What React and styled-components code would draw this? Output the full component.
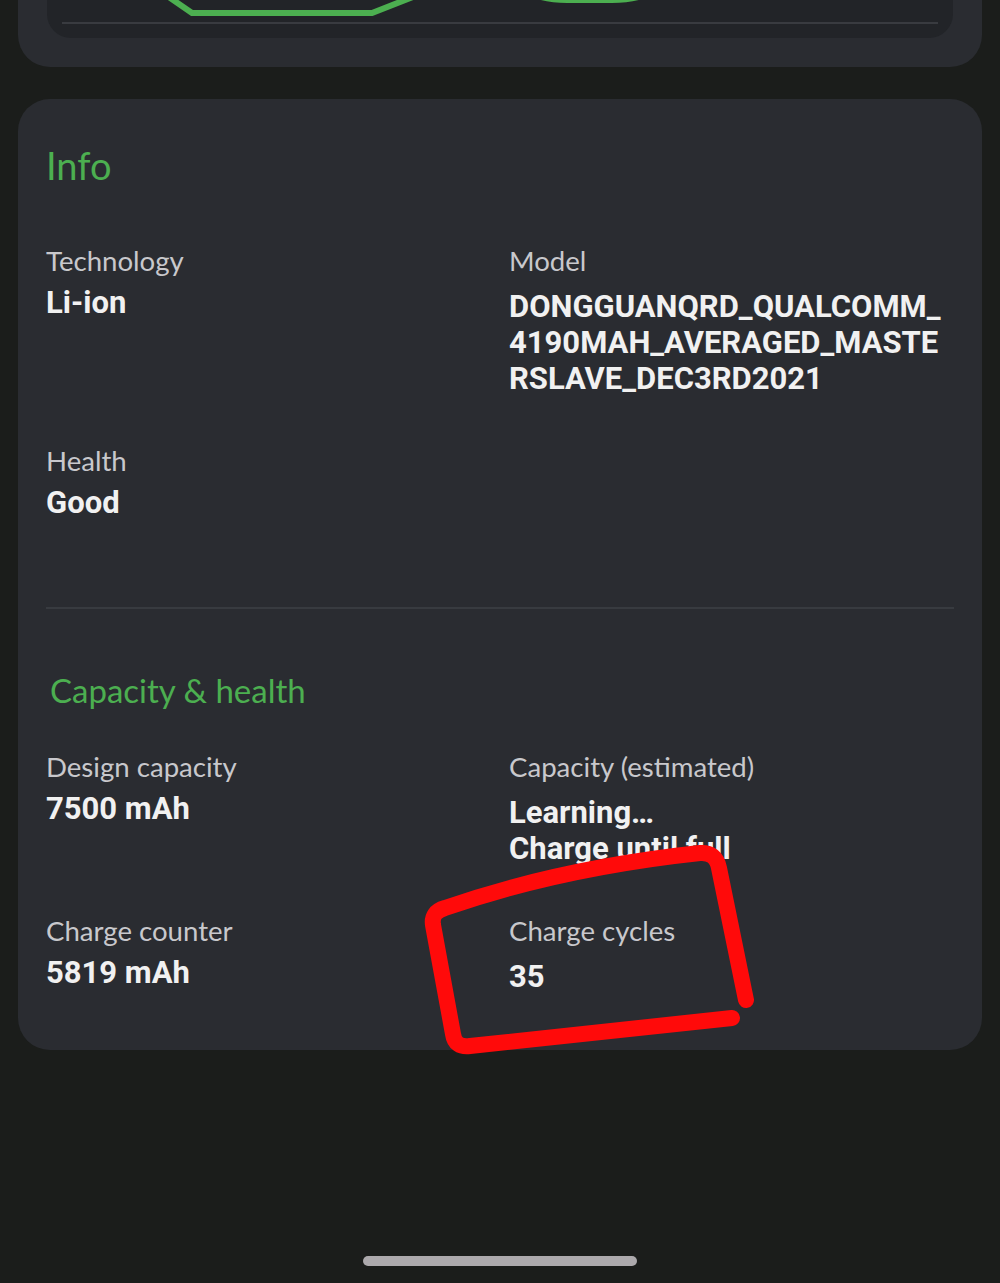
import styled, { createGlobalStyle } from "styled-components";

const infoItems = [
  { id: "technology", label: "Technology", lines: ["Li-ion"] },
  {
    id: "model",
    label: "Model",
    lines: [
      "DONGGUANQRD_QUALCOMM_",
      "4190MAH_AVERAGED_MASTE",
      "RSLAVE_DEC3RD2021",
    ],
  },
  { id: "health", label: "Health", lines: ["Good"] },
];

const capacityItems = [
  { id: "design", label: "Design capacity", lines: ["7500 mAh"] },
  {
    id: "estimated",
    label: "Capacity (estimated)",
    lines: ["Learning…", "Charge until full"],
  },
  { id: "counter", label: "Charge counter", lines: ["5819 mAh"] },
  { id: "cycles", label: "Charge cycles", lines: ["35"] },
];

const InfoGrid = ({ items }) => {
  return (
    <Grid>
      {items.map((item, index) => {
        return (
          <Item key={item.id}>
            <Label>{item.label}</Label>
            <Value $right={index % 2 === 1}>
              {item.lines.map((line) => (
                <span key={line}>{line}</span>
              ))}
            </Value>
          </Item>
        );
      })}
    </Grid>
  );
};

const App = () => {
  return (
    <Page>
      <GlobalStyle />
      <TopCard>
        <ChartPanel>
          <ChartTail viewBox="0 0 876 22" preserveAspectRatio="none">
            <polyline
              points="101,-7 130,13 310,13 361,-7"
              fill="none"
              stroke="#4caf50"
              strokeWidth="6"
            />
            <path
              d="M450 -20 Q468 0 505 0 L550 0 Q588 0 605 -20"
              fill="none"
              stroke="#4caf50"
              strokeWidth="6"
            />
          </ChartTail>
          <PanelLine />
        </ChartPanel>
      </TopCard>

      <Card>
        <Title>Info</Title>
        <InfoGrid items={infoItems} />
        <Divider />
        <Title $small>Capacity &amp; health</Title>
        <InfoGrid items={capacityItems} />
      </Card>

      <HomeBar />

      <Scribble viewBox="0 0 1000 1283">
        <path
          d="M732 1018 L470 1046 Q455 1048 453 1034 L433 925 Q431 912 445 908 Q560 868 700 853 Q716 852 719 868 L746 1000"
          fill="none"
          stroke="#ff0a0a"
          strokeWidth="16"
          strokeLinecap="round"
          strokeLinejoin="round"
        />
      </Scribble>
    </Page>
  );
};

const GlobalStyle = createGlobalStyle`
  * {
    box-sizing: border-box;
  }
  body {
    margin: 0;
    background: #1b1d1b;
    font-family: "Lato", "Roboto", sans-serif;
  }
`;

const Page = styled.div`
  position: relative;
  width: 1000px;
  height: 1283px;
  overflow: hidden;
  display: flex;
  flex-direction: column;
  padding: 0 18px;
  background: #1b1d1b;
`;

const TopCard = styled.div`
  height: 67px;
  flex-shrink: 0;
  padding: 0 29px;
  background: #2a2c31;
  border-radius: 0 0 32px 32px;
`;

const ChartPanel = styled.div`
  height: 38px;
  display: flex;
  flex-direction: column;
  padding: 0 15px;
  background: #222428;
  border-radius: 0 0 24px 24px;
`;

const ChartTail = styled.svg`
  display: block;
  width: 100%;
  height: 22px;
`;

const PanelLine = styled.div`
  height: 2px;
  background: #393b40;
`;

const Card = styled.section`
  margin-top: 32px;
  padding: 43px 28px 55px;
  background: #2a2c31;
  border-radius: 32px;
`;

const Title = styled.h2`
  margin: ${(p) => (p.$small ? "61px 0 40px 4px" : "0 0 56px")};
  font-family: "Lato", sans-serif;
  font-weight: 400;
  font-size: ${(p) => (p.$small ? "33px" : "38px")};
  line-height: ${(p) => (p.$small ? "40px" : "46px")};
  color: #4caf50;
`;

const Grid = styled.div`
  display: grid;
  grid-template-columns: 463px 1fr;
  row-gap: 47px;
`;

const Item = styled.div`
  display: flex;
  flex-direction: column;
  min-width: 0;
`;

const Label = styled.div`
  font-family: "Lato", sans-serif;
  font-size: 27.6px;
  line-height: 34px;
  color: #c8c8cc;
`;

const Value = styled.div`
  display: flex;
  flex-direction: column;
  margin-top: ${(p) => (p.$right ? "11px" : "7px")};
  font-family: "Roboto", sans-serif;
  font-weight: 700;
  font-size: 31px;
  line-height: 36px;
  color: #f1f1f1;
  white-space: nowrap;
`;

const Divider = styled.div`
  height: 2px;
  margin-top: 86px;
  background: #383b40;
`;

const HomeBar = styled.div`
  width: 274px;
  height: 10px;
  margin: auto auto 17px;
  border-radius: 5px;
  background: #aca9ac;
`;

const Scribble = styled.svg`
  position: absolute;
  top: 0;
  left: 0;
  width: 1000px;
  height: 1283px;
  pointer-events: none;
`;

export default App;
